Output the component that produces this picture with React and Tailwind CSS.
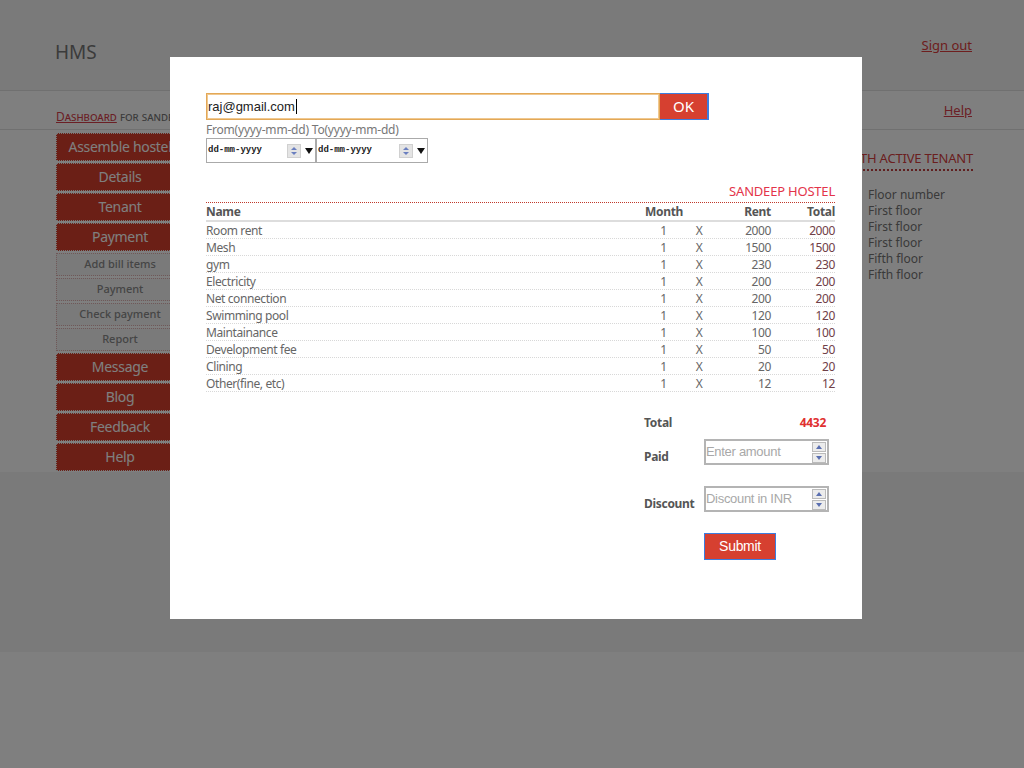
import React from "react";

const font = { fontFamily: '"Noto Sans", "Open Sans", sans-serif' };
const arial = { fontFamily: '"Liberation Sans", Arial, sans-serif' };

const mainItems1 = ["Assemble hostel", "Details", "Tenant", "Payment"];
const subItems = ["Add bill items", "Payment", "Check payment", "Report"];
const mainItems2 = ["Message", "Blog", "Feedback", "Help"];

const rows = [
  ["Room rent", 2000],
  ["Mesh", 1500],
  ["gym", 230],
  ["Electricity", 200],
  ["Net connection", 200],
  ["Swimming pool", 120],
  ["Maintainance", 100],
  ["Development fee", 50],
  ["Clining", 20],
  ["Other(fine, etc)", 12],
];

function MainItem({ label }) {
  return (
    <div className="h-[28px] mb-[2px] pb-[2px] bg-[#d63e2c] border border-dotted border-[#f0f0f0] flex items-center justify-center text-white text-[14px] tracking-[-0.3px] whitespace-nowrap overflow-hidden">
      {label}
    </div>
  );
}

function SubItem({ label }) {
  return (
    <div className="h-[23px] mb-[2px] pb-[1px] bg-[#f4f4f4] border border-dotted border-[#e0b0b0] flex items-center justify-center text-[#8a8a8a] text-[11px] font-medium">
      {label}
    </div>
  );
}

function DateInput({ w }) {
  return (
    <div className={`${w} h-[25px] border border-[#aaa] flex items-center pl-[1px] pr-[2px] bg-white`}>
      <span className="text-[9px] text-[#222] font-bold flex-1" style={{ fontFamily: '"Liberation Mono", monospace' }}>
        dd-mm-yyyy
      </span>
      <span className="w-[14px] h-[14px] bg-[#e4e4e4] border border-[#d0d0d0] flex flex-col items-center justify-center mr-[4px]">
        <svg width="8" height="10" viewBox="0 0 8 10">
          <path d="M1 4 L4 1 L7 4 Z" fill="#6a7fbf" />
          <path d="M1 6 L4 9 L7 6 Z" fill="#6a7fbf" />
        </svg>
      </span>
      <svg width="8" height="8" viewBox="0 0 8 8">
        <path d="M0 1 L8 1 L4 7 Z" fill="#111" />
      </svg>
    </div>
  );
}

function NumberInput({ placeholder }) {
  return (
    <div className="w-[125px] h-[26px] border-2 border-[#b4b4b4] bg-white flex items-stretch">
      <span className="flex-1 text-[13px] text-[#a8a8a8] leading-[21px]" style={arial}>
        {placeholder}
      </span>
      <span className="w-[14px] flex flex-col justify-center gap-[1px] mr-[1px]">
        <span className="h-[10px] bg-[#ececec] border border-[#bbb] flex items-center justify-center">
          <svg width="6" height="4" viewBox="0 0 6 4"><path d="M0 4 L3 0 L6 4 Z" fill="#5a6fb0" /></svg>
        </span>
        <span className="h-[10px] bg-[#ececec] border border-[#bbb] flex items-center justify-center">
          <svg width="6" height="4" viewBox="0 0 6 4"><path d="M0 0 L3 4 L6 0 Z" fill="#5a6fb0" /></svg>
        </span>
      </span>
    </div>
  );
}

export default function App() {
  return (
    <div className="relative min-h-[768px] bg-white" style={font}>
      {/* Page */}
      <div>
        <header className="h-[91px] bg-[#f4f4f4] border-b border-[#e0e0e0]">
          <div className="ml-[55px] w-[917px] h-full flex justify-between">
            <div className="text-[19px] text-[#777] pt-[38px]">HMS</div>
            <a className="text-[13px] text-[#dc3c3c] underline pt-[36px]">Sign out</a>
          </div>
        </header>
        <nav className="h-[39px] bg-white border-b border-[#e0e0e0]">
          <div className="ml-[56px] w-[916px] h-full flex justify-between">
            <div className="pt-[17px] text-[12px] text-[#777]" style={{ fontVariant: "small-caps" }}>
              <a className="text-[#d63e4a] underline">Dashboard</a> for sandeep hostel
            </div>
            <a className="text-[13px] text-[#d63e4a] underline pt-[10px]">Help</a>
          </div>
        </nav>
        <main className="h-[342px] bg-white">
          <div className="ml-[56px] w-[917px] flex justify-between pt-[3px]">
            <aside className="w-[128px]">
              {mainItems1.map((m) => <MainItem key={m} label={m} />)}
              {subItems.map((m) => <SubItem key={m} label={m} />)}
              {mainItems2.map((m) => <MainItem key={m} label={m} />)}
            </aside>
            <section className="w-[260px] pt-[12px]">
              <div className="text-right">
                <span className="text-[13px] text-[#d63e3e] uppercase border-b-2 border-dotted border-[#c04040] pb-[2px] tracking-[-0.2px]">
                  Rooms with active tenant
                </span>
              </div>
              <div className="mt-[18px] ml-[155px] flex flex-col text-[12px] text-[#747474] leading-[16px]">
                <span>Floor number</span>
                <span>First floor</span>
                <span>First floor</span>
                <span>First floor</span>
                <span>Fifth floor</span>
                <span>Fifth floor</span>
              </div>
            </section>
          </div>
        </main>
        <footer className="h-[180px] bg-[#f4f4f4]" />
      </div>

      {/* Overlay */}
      <div className="fixed inset-0 bg-black/50 z-10" />

      {/* Modal */}
      <div className="fixed left-[170px] top-[57px] w-[692px] h-[562px] bg-white z-20 pl-[36px] pr-[27px] pt-[36px]">
        <div className="flex">
          <div className="w-[454px] h-[27px] border border-[#e3a857] shadow-[0_0_0_1px_#f0c890_inset] flex items-center pl-[1px] text-[13px] text-[#222]" style={arial}>
            raj@gmail.com<span className="w-[1px] h-[15px] bg-black ml-[1px]" />
          </div>
          <button className="w-[49px] h-[27px] bg-[#d64030] text-white text-[15px] border-r-2 border-t border-b border-[#3b7de0] flex items-center justify-center">
            OK
          </button>
        </div>
        <div className="mt-[2px] text-[12px] text-[#777] leading-[16px] tracking-[-0.2px]">From(yyyy-mm-dd) To(yyyy-mm-dd)</div>
        <div className="flex">
          <DateInput w="w-[110px]" />
          <DateInput w="w-[112px]" />
        </div>

        <div className="mt-[20px] text-right text-[13px] text-[#e3344a] leading-[16px] tracking-[-0.2px]">SANDEEP HOSTEL</div>
        <div className="mt-[3px] border-t border-dotted border-[#c0392b]" />
        <div className="grid grid-cols-[439px_37px_34px_55px_64px] text-[12px] leading-[16px] font-bold text-[#555] border-b-2 border-[#ddd] h-[19px] items-center tracking-[-0.3px]">
          <span>Name</span>
          <span className="text-center">Month</span>
          <span />
          <span className="text-right">Rent</span>
          <span className="text-right">Total</span>
        </div>
        {rows.map(([n, v]) => (
          <div key={n} className="grid grid-cols-[439px_37px_34px_55px_64px] text-[12px] text-[#666] h-[17px] items-center border-b border-dotted border-[#d8d8d8] tracking-[-0.4px]">
            <span>{n}</span>
            <span className="text-center">1</span>
            <span className="text-center">X</span>
            <span className="text-right">{v}</span>
            <span className="text-right text-[#704048]">{v}</span>
          </div>
        ))}

        <div className="flex justify-end pr-[6px] mt-[22px]">
          <div className="w-[185px] text-[12px] tracking-[-0.3px]">
            <div className="flex justify-between items-center h-[18px] pr-[3px]">
              <span className="font-bold text-[#555]">Total</span>
              <span className="font-bold text-[#e03030]">4432</span>
            </div>
            <div className="flex items-end mt-[7px]">
              <span className="w-[60px] font-bold text-[#555] leading-[16px]">Paid</span>
              <NumberInput placeholder="Enter amount" />
            </div>
            <div className="flex items-end mt-[21px]">
              <span className="w-[60px] font-bold text-[#555] leading-[16px]">Discount</span>
              <NumberInput placeholder="Discount in INR" />
            </div>
            <div className="flex mt-[21px] pl-[60px]">
              <button className="w-[72px] h-[27px] bg-[#d64030] text-white text-[14px] border border-[#3b7de0]" style={arial}>
                Submit
              </button>
            </div>
          </div>
        </div>
      </div>
    </div>
  );
}
